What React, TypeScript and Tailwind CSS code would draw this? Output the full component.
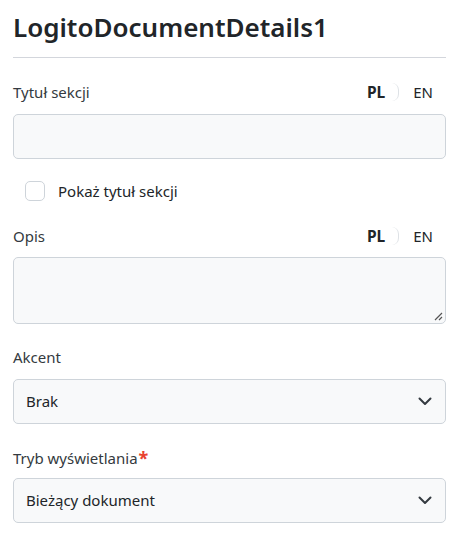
import React from "react";

const font = { fontFamily: '"Noto Sans", "Open Sans", sans-serif' };

function LangSwitch() {
  return (
    <div className="flex items-center text-[15px] leading-[20px] text-[#212529]">
      <span className="font-bold text-[15.5px]">PL</span>
      <span className="ml-[7px] w-[7px] h-[18px] border-r border-[#dee2e6] rounded-r-[7px]" />
      <span className="ml-[14px] mr-[13px]">EN</span>
    </div>
  );
}

function Chevron() {
  return (
    <svg width="14" height="9" viewBox="0 0 14 9" fill="none">
      <path d="M1.5 1.5 L7 7 L12.5 1.5" stroke="#343a40" strokeWidth="2" strokeLinecap="round" strokeLinejoin="round" />
    </svg>
  );
}

function Select({ value }: { value: string }) {
  return (
    <div className="h-[45px] rounded-[5px] border border-[#ced4da] bg-[#f8f9fa] flex items-center justify-between pl-[12px] pr-[13px] text-[15px] text-[#212529]">
      <span>{value}</span>
      <Chevron />
    </div>
  );
}

export default function App() {
  return (
    <div className="bg-white w-[465px] h-[535px] pl-[13px] pr-[19px] text-[#212529]" style={font}>
      <h1 className="text-[26px] leading-[36px] font-semibold pt-[9px] pb-[12px] text-[#212529]">
        LogitoDocumentDetails1
      </h1>
      <div className="h-px bg-[#d3d6dc]" />

      <div className="flex items-center justify-between h-[24px] mt-[22px]">
        <span className="text-[15px] text-[#343a40]">Tytuł sekcji</span>
        <LangSwitch />
      </div>
      <div className="mt-[10px] h-[45px] rounded-[5px] border border-[#ced4da] bg-[#f8f9fa]" />

      <label className="flex items-center gap-[13px] mt-[20px] ml-[12px] h-[24px]">
        <span className="w-[20px] h-[20px] rounded-[5px] border border-[#ced4da] bg-white" />
        <span className="text-[15px]">Pokaż tytuł sekcji</span>
      </label>

      <div className="flex items-center justify-between h-[24px] mt-[21px]">
        <span className="text-[15px] text-[#343a40]">Opis</span>
        <LangSwitch />
      </div>
      <div className="relative mt-[9px] h-[67px] rounded-[5px] border border-[#ced4da] bg-[#f8f9fa]">
        <svg className="absolute right-[2px] bottom-[2px]" width="10" height="10" viewBox="0 0 10 10">
          <path d="M9 2 L2 9 M9 6 L6 9" stroke="#555" strokeWidth="1.2" />
        </svg>
      </div>

      <div className="h-[24px] mt-[21px] flex items-center">
        <span className="text-[15px] text-[#343a40]">Akcent</span>
      </div>
      <div className="mt-[10px]">
        <Select value="Brak" />
      </div>

      <div className="h-[24px] mt-[22px] flex items-center">
        <span className="text-[15px] text-[#343a40]">Tryb wyświetlania</span>
        <span className="text-[#e8412f] text-[18px] font-bold leading-none ml-[1px]">*</span>
      </div>
      <div className="mt-[8px]">
        <Select value="Bieżący dokument" />
      </div>
    </div>
  );
}
